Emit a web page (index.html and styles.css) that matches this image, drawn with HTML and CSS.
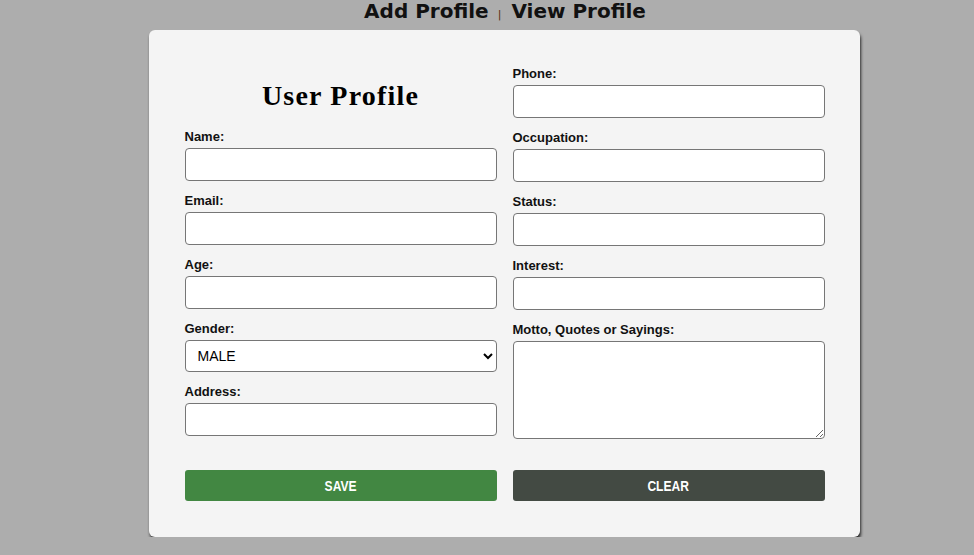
FILE: index.html
```html
<!DOCTYPE html>
<html>
<head>
<meta charset="utf-8">
<link rel="stylesheet" href="styles.css">
</head>
<body>
<div class="page">
  <nav class="nav">
    <a class="nav-link">Add Profile</a>
    <span class="sep">|</span>
    <a class="nav-link">View Profile</a>
  </nav>
  <div class="card">
    <div class="cols">
      <div class="col">
        <h2 class="title">User Profile</h2>
        <label class="lbl">Name:</label>
        <input class="field" type="text">
        <label class="lbl">Email:</label>
        <input class="field" type="text">
        <label class="lbl">Age:</label>
        <input class="field" type="text">
        <label class="lbl">Gender:</label>
        <select class="field select"><option>MALE</option><option>FEMALE</option></select>
        <label class="lbl">Address:</label>
        <input class="field last" type="text">
      </div>
      <div class="col">
        <label class="lbl">Phone:</label>
        <input class="field" type="text">
        <label class="lbl">Occupation:</label>
        <input class="field" type="text">
        <label class="lbl">Status:</label>
        <input class="field" type="text">
        <label class="lbl">Interest:</label>
        <input class="field" type="text">
        <label class="lbl">Motto, Quotes or Sayings:</label>
        <textarea class="field area last"></textarea>
      </div>
    </div>
    <div class="actions">
      <button class="btn save"><span class="btn-text">SAVE</span></button>
      <button class="btn clear"><span class="btn-text">CLEAR</span></button>
    </div>
  </div>
</div>
</body>
</html>
```

FILE: styles.css
```css
html, body {
  margin: 0;
  padding: 0;
  background: #adadad;
  font-family: "Liberation Sans", Arial, sans-serif;
}
.page {
  padding-left: 36px;
  display: flex;
  flex-direction: column;
  align-items: center;
}
.nav {
  display: flex;
  align-items: baseline;
  height: 23px;
  font-family: "DejaVu Sans", Verdana, sans-serif;
  font-weight: bold;
  font-size: 20px;
  line-height: 23px;
  color: #111;
}
.nav-link {
  color: #111;
  text-decoration: none;
}
.sep {
  font-family: "DejaVu Sans", sans-serif;
  font-weight: normal;
  font-size: 11px;
  color: #5a2d0c;
  margin: 0 10px 0 9px;
}
.card {
  box-sizing: border-box;
  width: 711px;
  margin-top: 7px;
  margin-right: 2px;
  background: #f4f4f4;
  border-radius: 6px;
  box-shadow: 1px 3px 3px rgba(0,0,0,0.75);
  padding: 37px 35px 36px 36px;
}
.cols {
  display: grid;
  grid-template-columns: 312px 312px;
  column-gap: 16px;
}
.col {
  display: flex;
  flex-direction: column;
}
.title {
  font-family: "Liberation Serif", "Times New Roman", serif;
  font-weight: bold;
  font-size: 28px;
  line-height: 32px;
  letter-spacing: 1.2px;
  text-align: center;
  margin: 13px 0 18px;
  color: #000;
}
.lbl {
  display: block;
  font-weight: bold;
  font-size: 13px;
  line-height: 13px;
  height: 13px;
  margin-bottom: 5px;
  color: #111;
}
.field {
  box-sizing: border-box;
  width: 312px;
  height: 33px;
  margin: 0 0 13px;
  border: 1px solid #767676;
  border-radius: 4px;
  background: #fff;
  font-family: "Liberation Sans", Arial, sans-serif;
  font-size: 14px;
  padding: 0 11px;
}
.select {
  height: 32px;
  padding-left: 8px;
  color: #000;
}
.area {
  height: 98px;
  resize: vertical;
}
.last {
  margin-bottom: 0;
}
.actions {
  display: grid;
  grid-template-columns: 312px 312px;
  column-gap: 16px;
  margin-top: 31px;
}
.btn {
  height: 31px;
  border: none;
  border-radius: 3px;
  color: #fff;
  font-family: "Liberation Sans", Arial, sans-serif;
  font-weight: bold;
  font-size: 14px;
  cursor: pointer;
}
.btn-text {
  display: inline-block;
  transform: scaleX(0.86);
}
.save {
  background: #428742;
}
.clear {
  background: #434a43;
}
```
